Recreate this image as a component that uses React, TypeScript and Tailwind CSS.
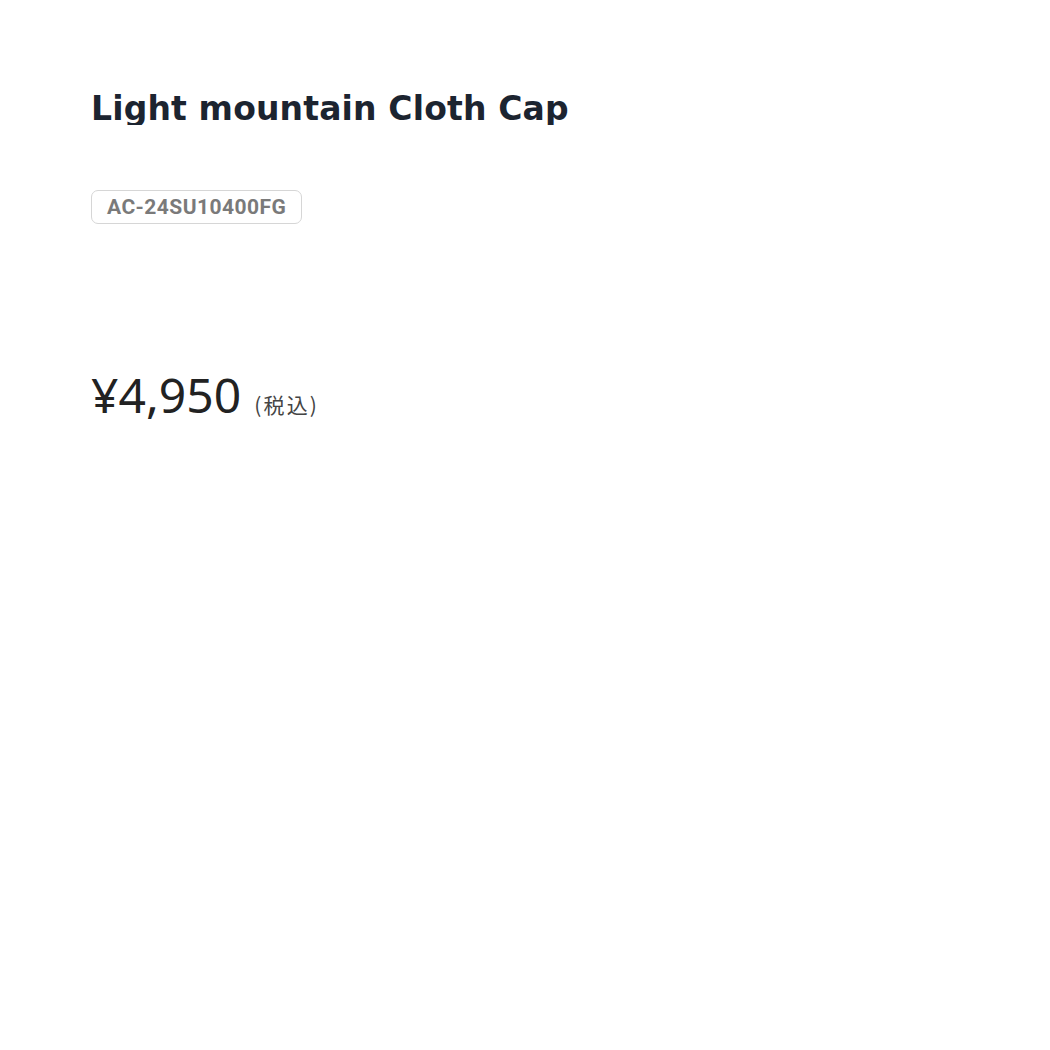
const App = () => {
  return (
    <div className="min-h-[1050px] bg-white px-[91px] pt-[85px]">
      {/* Title */}
      <h1 className="h-[40px] overflow-hidden text-[33px] leading-[48px] font-bold tracking-[0.15px] text-[#1c2430] [font-family:'DejaVu_Sans','Noto_Sans',sans-serif]">
        Light mountain Cloth Cap
      </h1>

      {/* Product code */}
      <div className="mt-[65px] flex">
        <span className="rounded-[7px] border border-[#d6d6d6] px-[15px] pt-[2px] h-[34px] flex items-center text-[21px] font-bold tracking-[0.45px] text-[#7a7a7a] [font-family:Roboto,sans-serif]">
          AC-24SU10400FG
        </span>
      </div>

      {/* Price */}
      <div className="mt-[147px] flex items-baseline gap-[13px] text-[#222] [font-family:'Noto_Sans','Noto_Sans_CJK_JP',sans-serif]">
        <span className="text-[48px] leading-none">¥4,950</span>
        <span className="text-[21px] tracking-[2.2px] text-[#444] [font-family:'Noto_Sans_CJK_JP',sans-serif]">(税込)</span>
      </div>
    </div>
  )
}

export default App
